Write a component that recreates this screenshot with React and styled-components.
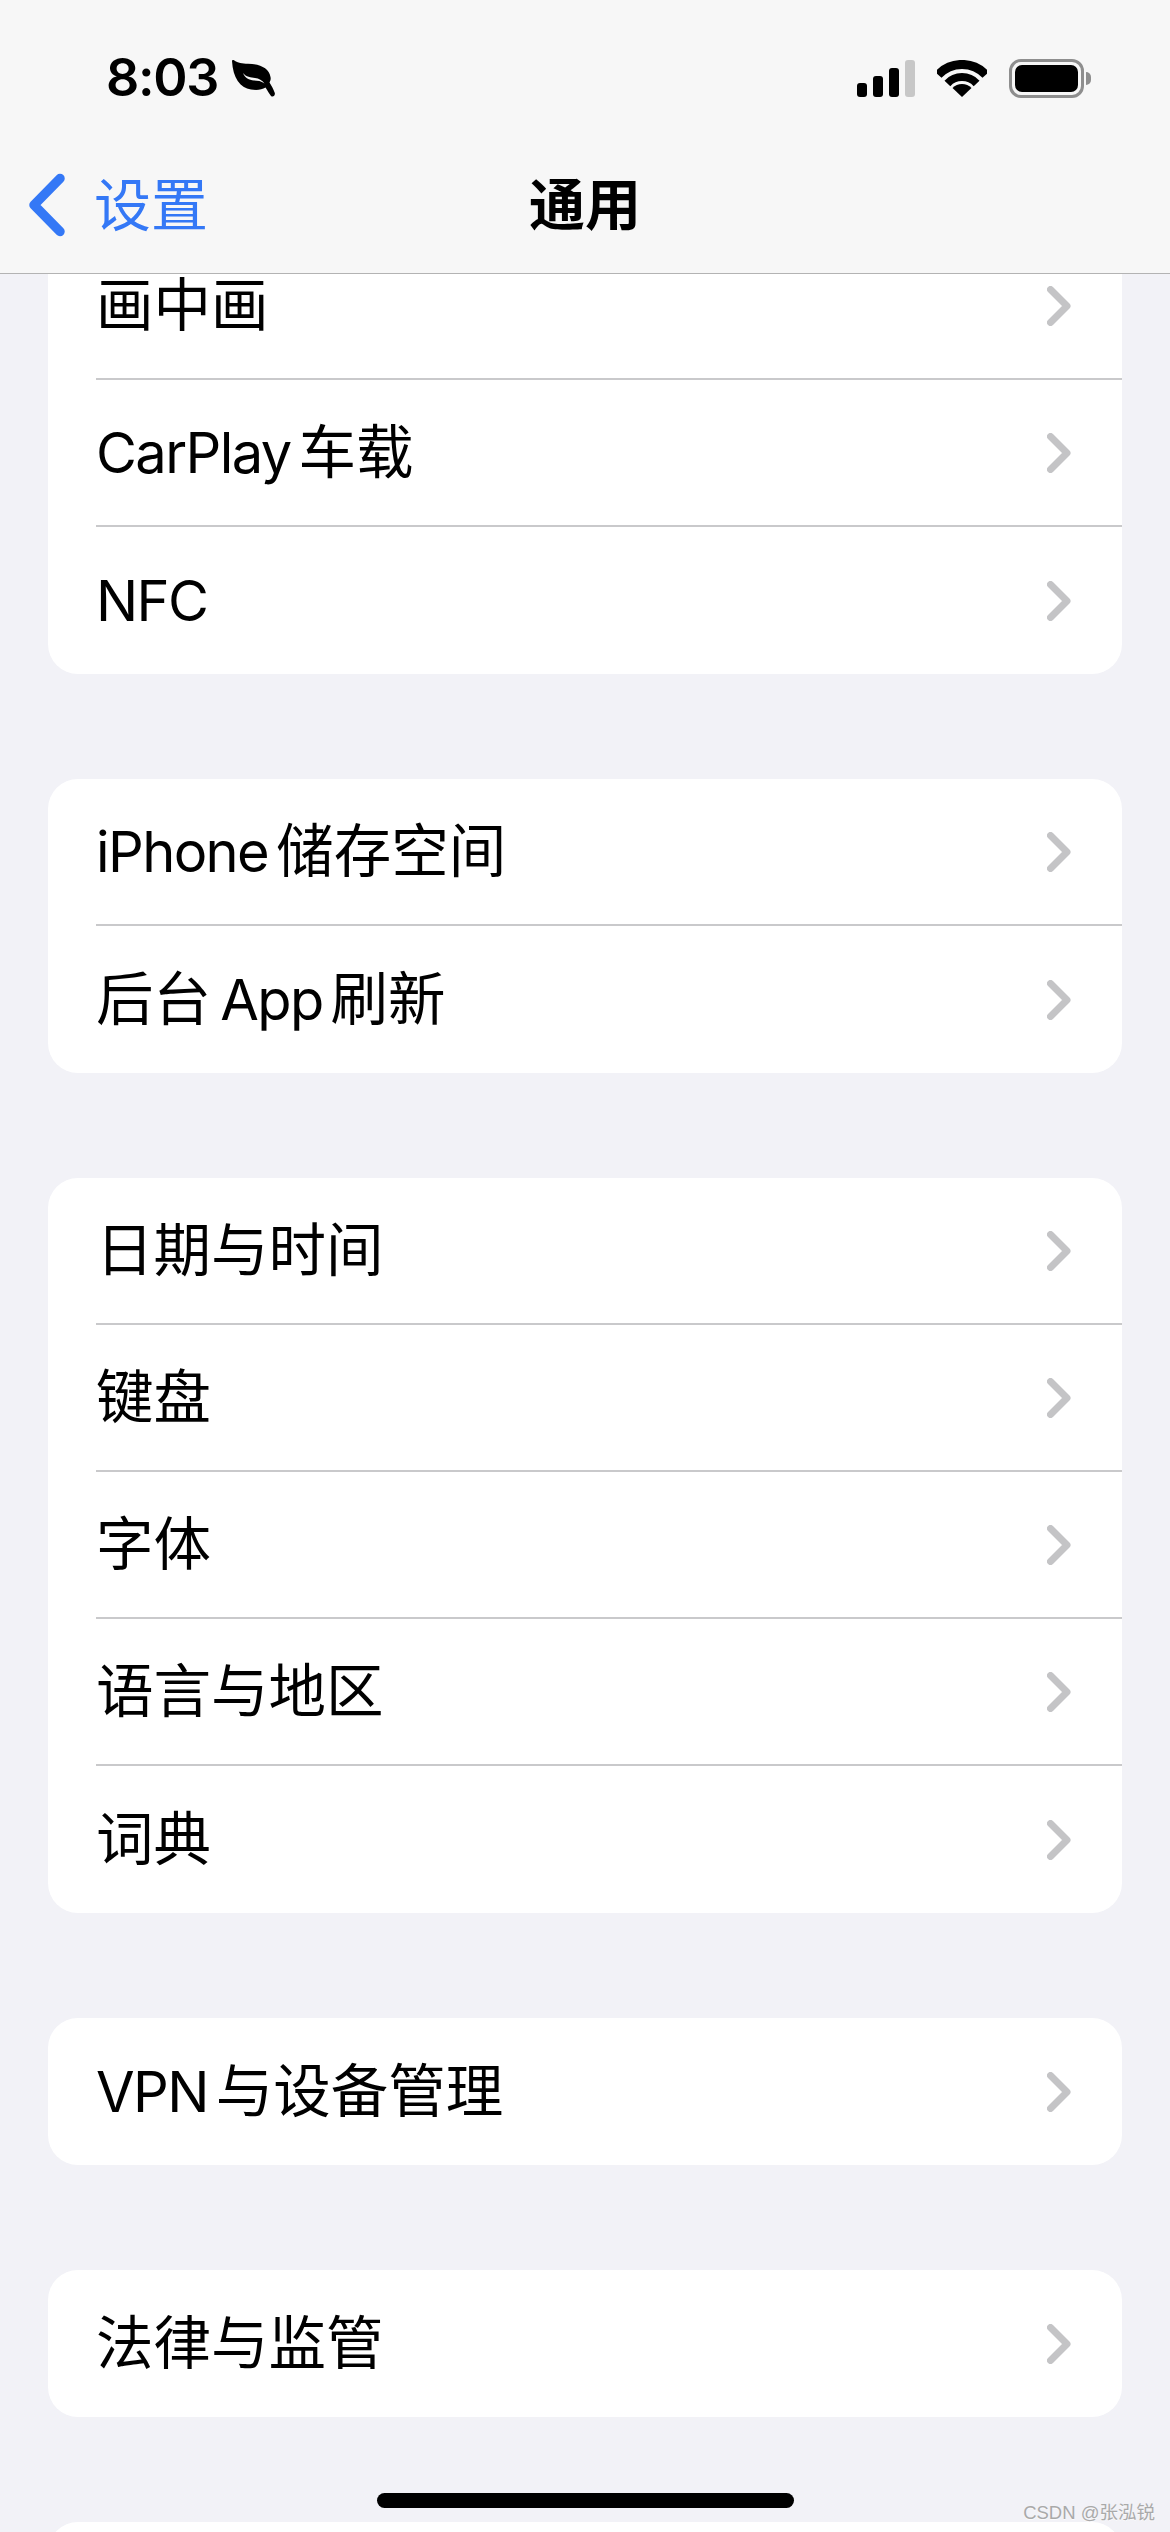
import React from "react"
import styled, { createGlobalStyle } from "styled-components"

const GROUPS = [
  ["画中画", "CarPlay车载", "NFC"],
  ["iPhone储存空间", "后台 App刷新"],
  ["日期与时间", "键盘", "字体", "语言与地区", "词典"],
  ["VPN与设备管理"],
  ["法律与监管"],
  [""],
]

const Leaf = () => (
  <svg width="43" height="37" viewBox="0 0 43 37">
    <path
      d="M0 1C0 0 1 -.3 2 .3C6 3 10 3.6 16 3.8C28 4 37 8 38.5 17C39 19 38.5 21 37.5 22.5C39.5 26 41.5 29 42.8 33C43.4 35.5 41 37.6 39 36C37 33.5 35.5 30.5 33.5 27.5C30 29.7 25 30.4 19 29.5C8 28 1 18 0 1Z"
      fill="#000"
    />
    <path
      d="M11 13C14 17 19 17.5 23 18C27 18.6 30 20 32.5 23.5C29 20.8 26 20.6 22 20.4C17 20 13 18 11 13Z"
      fill="#f7f7f7"
    />
  </svg>
)

const Wifi = () => (
  <svg width="50" height="37" viewBox="0 0 50 37" fill="none" stroke="#000">
    <path d="M1.2 14.8A32.5 32.5 0 0 1 48.8 14.8" strokeWidth="9" />
    <path d="M10.4 23.4A20 20 0 0 1 39.6 23.4" strokeWidth="8" />
    <path d="M25 37L15.5 28.1A13 13 0 0 1 34.5 28.1Z" fill="#000" stroke="none" />
  </svg>
)

const BackArrow = () => (
  <svg width="38" height="64" viewBox="0 0 38 64" fill="none">
    <path
      d="M32 5.5L6 32L32 58.5"
      stroke="#3478f6"
      strokeWidth="9.5"
      strokeLinecap="round"
      strokeLinejoin="round"
    />
  </svg>
)

const RowArrow = () => (
  <svg width="24" height="40" viewBox="0 0 24 40" fill="none">
    <path
      d="M3.5 3.5L20 20L3.5 36.5"
      stroke="#c4c4c6"
      strokeWidth="7"
      strokeLinecap="round"
      strokeLinejoin="round"
    />
  </svg>
)

// latin runs are set tighter than the CJK ones, like the system font does
const splitLabel = (label) =>
  label
    .split(/([A-Za-z ]+)/)
    .filter(Boolean)
    .map((part, i) =>
      /[A-Za-z]/.test(part) ? <Latin key={i}>{part}</Latin> : part
    )

const App = () => {
  return (
    <Screen>
      <GlobalStyle />
      <Header>
        <StatusBar>
          <TimeBlock>
            <Time>8:03</Time>
            <Leaf />
          </TimeBlock>
          <StatusIcons>
            <Signal>
              <SignalBar $h={14} />
              <SignalBar $h={21} />
              <SignalBar $h={29} />
              <SignalBar $h={37} $off />
            </Signal>
            <Wifi />
            <Battery>
              <BatteryBody>
                <BatteryFill />
              </BatteryBody>
              <BatteryNub />
            </Battery>
          </StatusIcons>
        </StatusBar>
        <NavBar>
          <BackLink>
            <BackArrow />
            <BackLabel>设置</BackLabel>
          </BackLink>
          <Title>通用</Title>
        </NavBar>
      </Header>

      <List>
        {GROUPS.map((rows, i) => (
          <Group key={i}>
            {rows.map((label) => (
              <Row key={label}>
                <RowInner>
                  <RowLabel>{splitLabel(label)}</RowLabel>
                  {label && <RowArrow />}
                </RowInner>
              </Row>
            ))}
          </Group>
        ))}
      </List>

      <HomeIndicator />
      <Watermark>CSDN @张泓锐</Watermark>
    </Screen>
  )
}

export default App

const GlobalStyle = createGlobalStyle`
  html, body {
    margin: 0;
    padding: 0;
    background: #f2f2f7;
  }
  * {
    box-sizing: border-box;
  }
`

const Screen = styled.div`
  position: relative;
  width: 1170px;
  height: 2532px;
  overflow: hidden;
  background: #f2f2f7;
  color: #000;
  font-family: Inter, "Noto Sans CJK SC", sans-serif;
`

const Header = styled.header`
  position: absolute;
  top: 0;
  left: 0;
  right: 0;
  z-index: 2;
  height: 274px;
  background: #f7f7f7;
  border-bottom: 1px solid #b3b3b3;
`

const StatusBar = styled.div`
  display: flex;
  align-items: center;
  justify-content: space-between;
  height: 156px;
  padding: 0 79px 0 106px;
`

const TimeBlock = styled.div`
  display: flex;
  align-items: center;
  gap: 14px;
`

const Time = styled.span`
  font-size: 52px;
  font-weight: 600;
  line-height: 1;
  letter-spacing: -1.3px;
`

const StatusIcons = styled.div`
  display: flex;
  align-items: center;
  gap: 22px;
`

const Signal = styled.div`
  display: flex;
  align-items: flex-end;
  gap: 6px;
  height: 37px;
`

const SignalBar = styled.div`
  width: 10px;
  height: ${(p) => p.$h}px;
  border-radius: 3px;
  background: ${(p) => (p.$off ? "#c7c7c7" : "#000")};
`

const Battery = styled.div`
  display: flex;
  align-items: center;
  gap: 2px;
`

const BatteryBody = styled.div`
  display: flex;
  width: 75px;
  height: 39px;
  padding: 3px;
  border: 3px solid #8e8e8e;
  border-radius: 12px;
`

const BatteryFill = styled.div`
  flex: 1;
  border-radius: 7px;
  background: #000;
`

const BatteryNub = styled.div`
  width: 5px;
  height: 13px;
  border-radius: 0 6px 6px 0;
  background: #8e8e8e;
`

const NavBar = styled.nav`
  display: grid;
  grid-template-columns: 1fr auto 1fr;
  align-items: center;
  height: 98px;
  padding-left: 28px;
`

const BackLink = styled.a`
  display: flex;
  align-items: center;
  gap: 28px;
  color: #3478f6;
`

const BackLabel = styled.span`
  font-size: 57px;
  line-height: 1;
`

const Title = styled.h1`
  margin: 0 0 0 -28px;
  font-size: 56px;
  font-weight: 700;
  line-height: 1;
`

const List = styled.main`
  display: flex;
  flex-direction: column;
  gap: 105px;
  padding: 233px 48px 0;
`

const Group = styled.section`
  border-radius: 30px;
  background: #fff;
  overflow: hidden;
`

const Row = styled.div`
  display: flex;
  height: 147px;
  padding-left: 48px;
`

const RowInner = styled.div`
  flex: 1;
  display: flex;
  align-items: center;
  justify-content: space-between;
  padding-right: 51px;
  border-bottom: 2px solid #c9c9cb;

  ${Row}:last-child & {
    border-bottom: 0;
  }
`

const RowLabel = styled.span`
  font-size: 57.5px;
  line-height: 1;
`

const Latin = styled.span`
  margin-right: 8px;
  font-size: 56px;
  letter-spacing: -1.6px;
  word-spacing: -5px;
`

const HomeIndicator = styled.div`
  position: absolute;
  left: 377px;
  top: 2493px;
  z-index: 3;
  width: 417px;
  height: 15px;
  border-radius: 8px;
  background: #000;
`

const Watermark = styled.div`
  position: absolute;
  right: 15px;
  top: 2504px;
  z-index: 3;
  font-family: "Liberation Sans", "Noto Sans CJK SC", sans-serif;
  font-size: 18.5px;
  line-height: 1;
  color: #a9a9a9;
  text-shadow: 0 1px 0 rgba(255, 255, 255, 0.7);
`
